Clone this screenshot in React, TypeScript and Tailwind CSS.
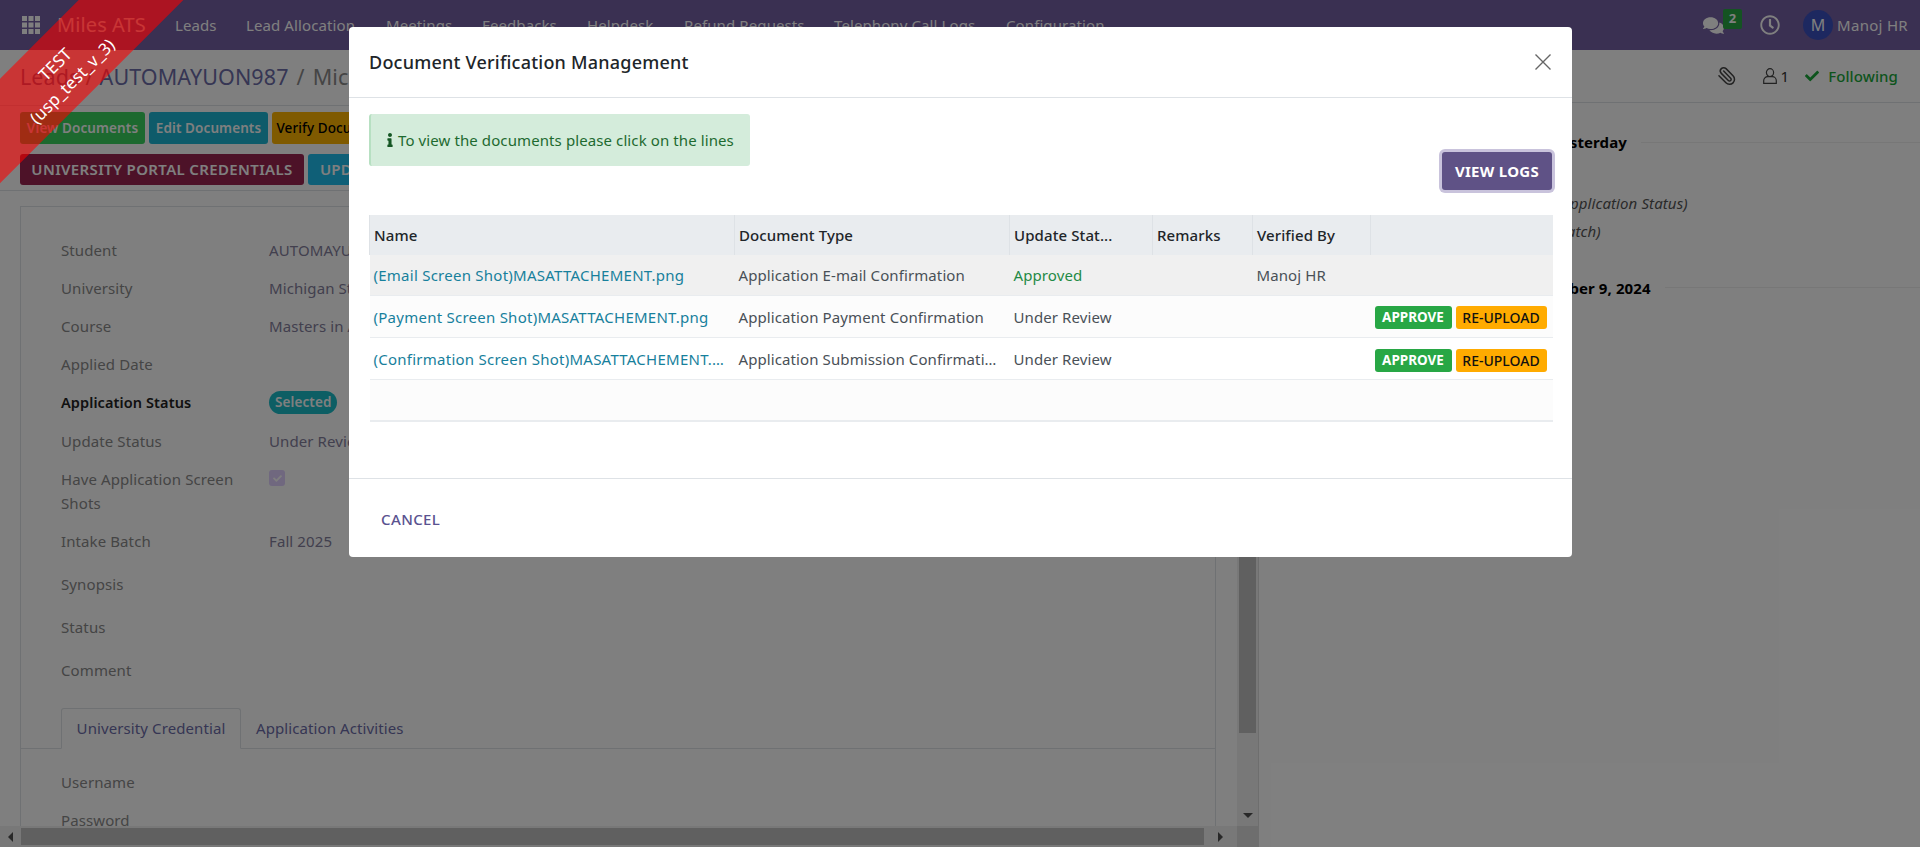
import { FaComments, FaRegClock, FaCheck, FaInfo } from "react-icons/fa";
import { Paperclip } from "lucide-react";

const navItems = [
  { t: "Leads", w: "w-[71px]" },
  { t: "Lead Allocation", w: "w-[140px]" },
  { t: "Meetings", w: "w-[96px]" },
  { t: "Feedbacks", w: "w-[105px]" },
  { t: "Helpdesk", w: "w-[97px]" },
  { t: "Refund Requests", w: "w-[150px]" },
  { t: "Telephony Call Logs", w: "w-[172px]" },
  { t: "Configuration", w: "w-[110px]" },
];

const rows = [
  { label: "Student", value: "AUTOMAYUON987", h: "h-[38px]" },
  { label: "University", value: "Michigan State University", h: "h-[38px]" },
  { label: "Course", value: "Masters in Accounting", h: "h-[38px]" },
  { label: "Applied Date", value: "", h: "h-[38px]" },
  { label: "Application Status", value: "badge", h: "h-[39px]", bold: true },
  { label: "Update Status", value: "Under Review", h: "h-[38px]" },
  { label: "Have Application Screen Shots", value: "check", h: "h-[62px]" },
  { label: "Intake Batch", value: "Fall 2025", h: "h-[43px]" },
  { label: "Synopsis", value: "", h: "h-[43px]" },
  { label: "Status", value: "", h: "h-[43px]" },
  { label: "Comment", value: "", h: "h-[57px]" },
];

function FormRow({ label, value, h, bold }: { label: string; value: string; h: string; bold?: boolean }) {
  return (
    <div className={`grid grid-cols-[208px_1fr] ${h} pt-[7px] leading-[24px]`}>
      <div className={bold ? "pr-6 text-[14.5px] font-semibold text-[#222222]" : "pr-6 text-[#8a8a8a]"}>{label}</div>
      <div className="text-[#84809c]">
        {value === "badge" ? (
          <span className="inline-block h-[23px] -translate-y-[1px] rounded-full bg-[#1abcc8] px-[6px] text-[13.5px] font-semibold leading-[22px] text-white">Selected</span>
        ) : value === "check" ? (
          <span className="mt-[3px] flex h-4 w-4 items-center justify-center rounded-[3px] bg-[#e0d0ff] text-white">
            <FaCheck className="h-[9px] w-[9px]" />
          </span>
        ) : (
          value
        )}
      </div>
    </div>
  );
}

function ActionBadges({ top }: { top: string }) {
  return (
    <div className={`flex justify-end gap-[4px] pr-[6px] ${top}`}>
      <span className="flex h-[23px] w-[77px] items-center justify-center rounded-[3px] bg-[#28a745] text-[13.5px] font-bold tracking-normal text-white">APPROVE</span>
      <span className="flex h-[23px] w-[91px] items-center justify-center rounded-[3px] bg-[#ffab00] text-[14px] font-medium tracking-normal text-[#111111]">RE-UPLOAD</span>
    </div>
  );
}

export default function App() {
  return (
    <div className="relative h-[847px] w-[1920px] overflow-hidden bg-white text-[15px] tracking-[0.1px] text-[#212529] [font-family:'Noto_Sans',sans-serif]">
      {/* Navbar */}
      <header className="flex h-[50px] items-center bg-[#7460a4] text-white">
        <svg className="ml-[22px] h-[18px] w-[18px]" viewBox="0 0 18 18" fill="#ffffff">
          {[0, 6.5, 13].map((y) => [0, 6.5, 13].map((x) => <rect key={`${x}-${y}`} x={x} y={y} width="5" height="5" />))}
        </svg>
        <span className="ml-[17px] w-[118px] text-[20px]">Miles ATS</span>
        <nav className="flex">
          {navItems.map((n) => (
            <span key={n.t} className={n.w}>{n.t}</span>
          ))}
        </nav>
        <div className="ml-auto flex items-center pr-[12px]">
          <span className="relative mr-[36px]">
            <FaComments className="h-[21px] w-[21px]" />
            <span className="absolute -right-[18px] -top-[6px] flex h-[20px] w-[19px] items-center justify-center rounded-[2px] bg-[#28a745] text-[13px] font-bold">2</span>
          </span>
          <FaRegClock className="mr-[23px] h-[20px] w-[20px]" />
          <span className="flex h-[30px] w-[30px] items-center justify-center rounded-full bg-[#3a50c0] text-[16px]">M</span>
          <span className="ml-[4px] tracking-[0.3px]">Manoj HR</span>
        </div>
      </header>

      <div className="flex h-[797px]">
        {/* Left pane */}
        <div className="flex w-[1259px] flex-col border-r border-[#dddddd]">
          <div className="flex h-[56px] items-center border-b border-[#dee2e6] pl-[20px] text-[21.5px]">
            <span className="text-[#7a7aa8]">Leads</span>
            <span className="mx-[6px] text-[#8a8a8a]">/</span>
            <span className="text-[#6c6ca8]">AUTOMAYUON987</span>
            <span className="mx-[8px] text-[#8a8a8a]">/</span>
            <span className="text-[#8a8a8a]">Michigan State University</span>
          </div>
          <div className="border-b border-[#dee2e6] pb-[5px] pl-[20px] pt-[6px]">
            <div className="flex gap-[4px]">
              <span className="flex h-[32px] w-[125px] items-center justify-center rounded-[3px] bg-[#3ad25e] text-[13.5px] font-semibold text-white">View Documents</span>
              <span className="flex h-[32px] w-[119px] items-center justify-center rounded-[3px] bg-[#1cb6d4] text-[13.5px] font-semibold text-white">Edit Documents</span>
              <span className="flex h-[32px] w-[125px] items-center justify-center rounded-[3px] bg-[#ffb400] text-[13.5px] font-medium text-black">Verify Documents</span>
            </div>
            <div className="mt-[10px] flex gap-[4px]">
              <span className="flex h-[31px] w-[284px] items-center justify-center rounded-[3px] bg-[#9a2450] font-semibold tracking-[0.35px] text-white">UNIVERSITY PORTAL CREDENTIALS</span>
              <span className="flex h-[31px] w-[160px] items-center justify-start rounded-[3px] bg-[#1ebeee] pl-[12px] font-semibold text-white">UPDATE</span>
            </div>
          </div>
          <div className="flex min-h-0 flex-1">
            <div className="min-w-0 flex-1 pl-[20px] pr-[21px] pt-[15px]">
              <div className="h-full overflow-hidden border border-b-0 border-[#dee2e6] bg-white">
                <div className="pl-[40px] pt-[24px]">
                  {rows.map((r) => (
                    <FormRow key={r.label} {...r} />
                  ))}
                </div>
                <div className="flex h-[41px] border-b border-[#dee2e6] pl-[40px]">
                  <span className="flex h-[41px] w-[180px] items-center justify-center rounded-t-[3px] border border-[#dee2e6] border-b-white bg-white text-[#6c6ca8]">University Credential</span>
                  <span className="flex h-[40px] items-center pl-[15px] text-[#6c6ca8]">Application Activities</span>
                </div>
                <div className="pl-[40px] pt-[14px]">
                  <FormRow label="Username" value="" h="h-[38px]" />
                  <FormRow label="Password" value="" h="h-[38px]" />
                </div>
              </div>
            </div>
            <div className="flex w-[21px] flex-col items-center bg-[#f1f1f1]">
              <div className="h-[542px] w-[17px] shrink-0 bg-[#c1c1c1]" />
              <div className="flex-1" />
              <div className="mb-[8px] h-0 w-0 border-x-[5px] border-t-[5px] border-x-transparent border-t-[#505050]" />
            </div>
          </div>
          <div className="flex h-[21px] shrink-0 items-center bg-[#f1f1f1]">
            <div className="flex w-[21px] justify-center">
              <div className="h-0 w-0 border-y-[5px] border-r-[5px] border-y-transparent border-r-[#505050]" />
            </div>
            <div className="h-[17px] w-[1183px] bg-[#c1c1c1]" />
            <div className="flex w-[33px] justify-center">
              <div className="h-0 w-0 border-y-[5px] border-l-[5px] border-y-transparent border-l-[#505050]" />
            </div>
            <div className="h-full flex-1 bg-[#dcdcdc]" />
          </div>
        </div>

        {/* Chatter */}
        <div className="min-w-0 flex-1">
          <div className="flex h-[53px] items-center justify-end border-b border-[#dee2e6] pr-[22px]">
            <Paperclip className="mr-[26px] h-[20px] w-[20px] -scale-x-100 text-[#444444]" strokeWidth={1.8} />
            <svg className="h-[16px] w-[14px]" viewBox="0 0 14 16" fill="none" stroke="#444444" strokeWidth="1.2">
              <ellipse cx="7" cy="4.6" rx="3.6" ry="3.9" />
              <path d="M0.7 15.3v-2.6a4 4 0 0 1 4-4h4.6a4 4 0 0 1 4 4v2.6z" />
            </svg>
            <span className="ml-[4px] mr-[16px] text-[#333333]">1</span>
            <FaCheck className="h-[14px] w-[14px] text-[#1aa83a]" />
            <span className="ml-[9px] font-medium text-[#1aa83a]">Following</span>
          </div>
          <div className="flex items-center pl-[293px] pt-[28px]">
            <span className="font-bold text-black">Yesterday</span>
            <div className="ml-[14px] h-px flex-1 bg-[#eeeeee]" />
          </div>
          <div className="pl-[298px] pt-[38px] italic text-[#555555]">(Application Status)</div>
          <div className="pl-[248px] pt-[6px] italic text-[#555555]">(Intake Batch)</div>
          <div className="flex items-center pl-[253px] pt-[34px]">
            <span className="font-bold text-black">September 9, 2024</span>
            <div className="ml-[14px] h-px flex-1 bg-[#eeeeee]" />
          </div>
        </div>
      </div>

      {/* Backdrop */}
      <div className="absolute inset-0 bg-black/50" />

      {/* Test ribbon */}
      <div className="absolute -left-[94px] top-[33px] flex h-[74px] w-[310px] -rotate-45 flex-col items-center justify-center bg-[rgba(255,0,0,0.58)] pt-[8px] text-[17px] leading-[24px] text-white">
        <span>TEST</span>
        <span>(usp_test_v_3)</span>
      </div>

      {/* Modal */}
      <div className="absolute left-[349px] top-[27px] flex h-[530px] w-[1223px] flex-col rounded-[4px] bg-white">
        <div className="flex h-[71px] shrink-0 items-center justify-between border-b border-[#dee2e6] pl-[20px] pr-[21px]">
          <h4 className="text-[18px] font-medium tracking-[0.22px] text-[#212529]">Document Verification Management</h4>
          <svg className="h-4 w-4" viewBox="0 0 16 16" fill="none" stroke="#666666" strokeWidth="1.4">
            <path d="M0.5 0.5l15 15M15.5 0.5l-15 15" />
          </svg>
        </div>
        <div className="flex-1 px-[20px] pt-[16px]">
          <div className="flex items-start justify-between">
            <div className="flex h-[52px] w-[381px] items-center rounded-[3px] border-l-[2px] border-[#b7e0c2] bg-[#d4ecdb] pl-[15px] text-[#1e6a30]">
              <FaInfo className="h-[14px] w-[8px] text-[#155724]" />
              <span className="ml-[4px]">To view the documents please click on the lines</span>
            </div>
            <button className="mt-[38px] h-[38px] w-[110px] rounded-[3px] bg-[#5f5286] text-[15px] font-bold tracking-[0.3px] text-white ring-[3px] ring-[#c9c3dc]">VIEW LOGS</button>
          </div>
          <table className="mt-[25px] w-[1183px] table-fixed border-collapse">
            <colgroup>
              <col className="w-[365px]" />
              <col className="w-[275px]" />
              <col className="w-[143px]" />
              <col className="w-[100px]" />
              <col className="w-[118px]" />
              <col className="w-[182px]" />
            </colgroup>
            <thead>
              <tr className="h-[40px] bg-[#e9ecef] text-left text-[#212529]">
                <th className="truncate border-l border-[#dee2e6] px-[4px] font-medium">Name</th>
                <th className="truncate border-l border-[#dee2e6] px-[4px] font-medium">Document Type</th>
                <th className="truncate border-l border-[#dee2e6] px-[4px] font-medium">Update Stat...</th>
                <th className="truncate border-l border-[#dee2e6] px-[4px] font-medium">Remarks</th>
                <th className="truncate border-l border-[#dee2e6] px-[4px] font-medium">Verified By</th>
                <th className="border-l border-[#dee2e6]"></th>
              </tr>
            </thead>
            <tbody className="text-[#495057]">
              <tr className="h-[40px] border-b border-[#e9ecef] bg-[#f0f0f0]">
                <td className="truncate px-[4px] tracking-[0.25px] text-[#17809c]">(Email Screen Shot)MASATTACHEMENT.png</td>
                <td className="truncate px-[4px]">Application E-mail Confirmation</td>
                <td className="truncate px-[4px] text-[#1f8a45]">Approved</td>
                <td className="px-[4px]"></td>
                <td className="truncate px-[4px]">Manoj HR</td>
                <td></td>
              </tr>
              <tr className="h-[42px] border-b border-[#e9ecef] bg-[#fcfcfc]">
                <td className="truncate px-[4px] pt-[2px] tracking-[0.25px] text-[#17809c]">(Payment Screen Shot)MASATTACHEMENT.png</td>
                <td className="truncate px-[4px] pt-[2px]">Application Payment Confirmation</td>
                <td className="truncate px-[4px] pt-[2px]">Under Review</td>
                <td className="px-[4px]"></td>
                <td className="px-[4px]"></td>
                <td><ActionBadges top="pt-[2px]" /></td>
              </tr>
              <tr className="h-[42px] border-b border-[#e9ecef] bg-white">
                <td className="truncate px-[4px] pt-[2px] tracking-[0.25px] text-[#17809c]">(Confirmation Screen Shot)MASATTACHEMENT.png</td>
                <td className="truncate pl-[4px] pr-[11px] pt-[2px]">Application Submission Confirmation</td>
                <td className="truncate px-[4px] pt-[2px]">Under Review</td>
                <td className="px-[4px]"></td>
                <td className="px-[4px]"></td>
                <td><ActionBadges top="pt-[4px]" /></td>
              </tr>
              <tr className="h-[42px] border-b-2 border-[#e9ecef] bg-[#fcfcfc]">
                <td colSpan={6}></td>
              </tr>
            </tbody>
          </table>
        </div>
        <div className="flex h-[79px] shrink-0 items-center border-t border-[#dee2e6] pl-[32px]">
          <span className="pt-[2px] font-medium tracking-[0.4px] text-[#5a5290]">CANCEL</span>
        </div>
      </div>
    </div>
  );
}
